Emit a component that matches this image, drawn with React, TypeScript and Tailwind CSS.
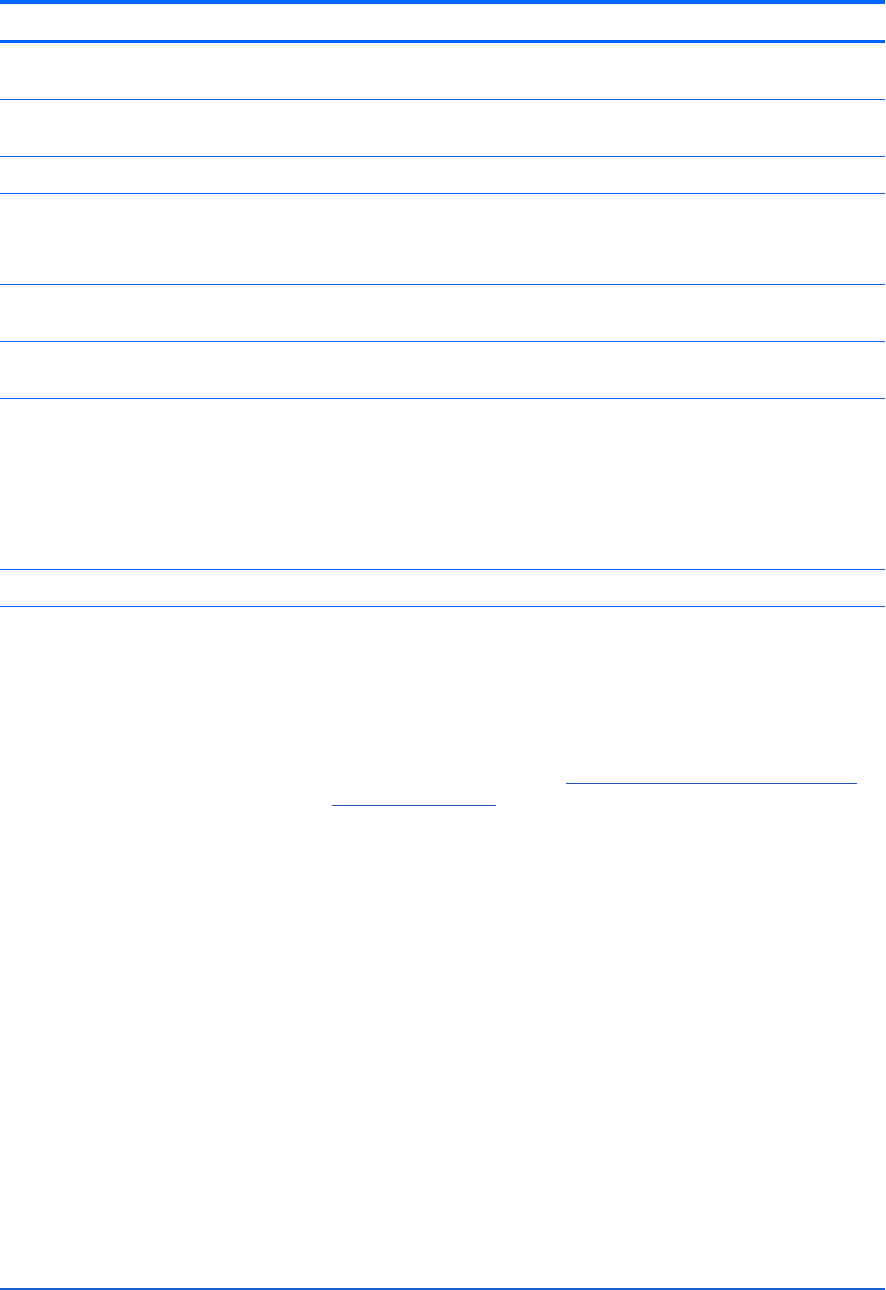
const rows = [56, 56, 36, 90, 56, 56, 170, 36];

export default function App() {
  return (
    <div className="min-h-[1290px] bg-white font-['Liberation_Sans',Arial,sans-serif] text-[13px] text-white">
      <div className="w-[885px]">
        <div className="h-[43px] border-t-4 border-b-[3px] border-[#0066ff]" />
        {rows.map((h, i) => (
          <div
            key={i}
            className="border-b border-[#0066ff]"
            style={{ height: h + 1 }}
          />
        ))}
        <div className="flex h-[683px] flex-col border-b-2 border-[#1a5fd0] pt-[162px]">
          <div className="flex h-[15px] justify-end pr-[28px]">
            <span className="w-[291px] border-b border-[#2b4fb8]" />
          </div>
          <div className="mt-[21px] flex h-[1px] pl-[332px]">
            <span className="w-[164px] border-b border-[#2b4fb8]" />
          </div>
        </div>
      </div>
    </div>
  );
}
